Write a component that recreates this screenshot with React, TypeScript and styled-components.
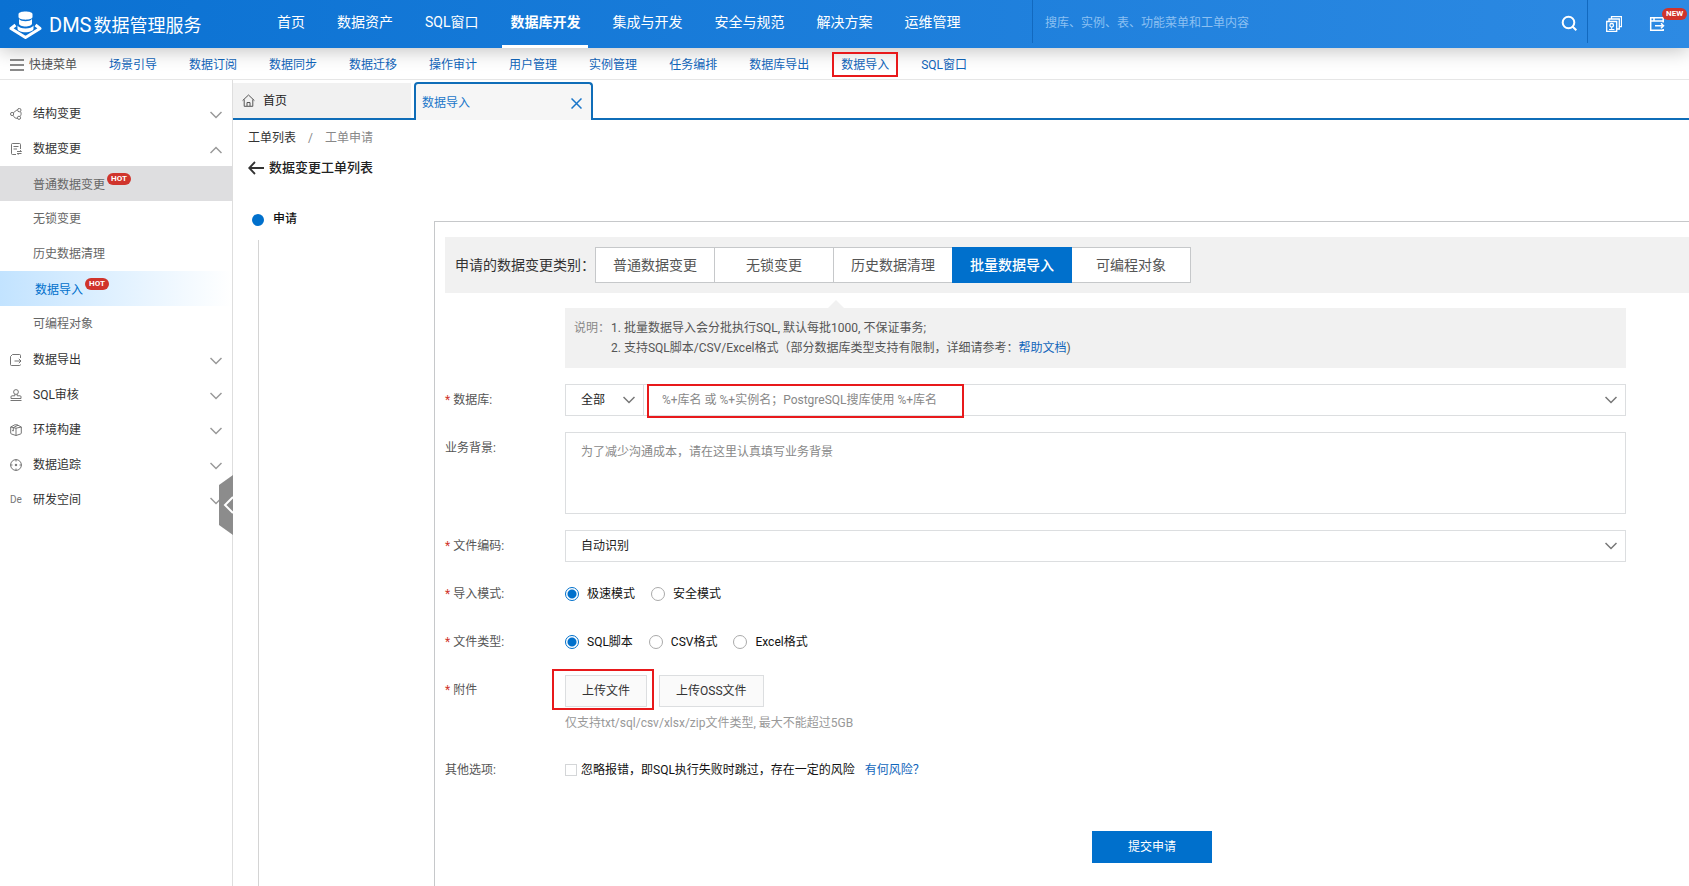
import React from "react";
import styled, { createGlobalStyle, css } from "styled-components";

const GlobalStyle = createGlobalStyle`
  * { box-sizing: border-box; }
  html, body, #root { height: 100%; }
  body {
    margin: 0;
    background: #fff;
    color: #333;
    font-family: Roboto, "Noto Sans CJK SC", sans-serif;
    font-size: 12px;
    line-height: 20px;
  }
  button, input, select, textarea { font: inherit; color: inherit; margin: 0; }
  a { text-decoration: none; }
`;

const BLUE = "#0070cc";
const LINK = "#1166bb";

const Page = styled.div`
  min-height: 100%;
  display: flex;
  flex-direction: column;
  overflow: hidden;
`;

const Header = styled.header`
  position: relative;
  z-index: 1;
  display: flex;
  height: 48px;
  flex: none;
  color: #fff;
  background: linear-gradient(90deg, #0a71d2, #2d8ae3);
  box-shadow: 0 2px 20px rgba(0, 0, 0, 0.26);
`;

const Brand = styled.a`
  display: flex;
  align-items: center;
  gap: 7px;
  width: 269px;
  flex: none;
  padding: 2px 0 0 9px;
  color: #fff;
  font-size: 18px;
  line-height: 24px;
`;

const BrandLatin = styled.span`
  margin-right: 2px;
  font-size: 20px;
`;

const TopNav = styled.nav`
  display: flex;
  gap: 16px;
`;

const TopLink = styled.a<{ $active?: boolean }>`
  display: flex;
  align-items: center;
  padding: 0 8px 4px;
  color: #fff;
  font-size: 14px;
  white-space: nowrap;
  font-weight: ${(p) => (p.$active ? 700 : 400)};
  box-shadow: ${(p) => (p.$active ? "inset 0 -3px #fff" : "none")};
`;

const SearchBar = styled.label`
  display: flex;
  align-items: center;
  width: 556px;
  height: 43px;
  margin-left: auto;
  padding: 2px 10px 0 12px;
  border: solid #1269bf;
  border-width: 0 1px;
`;

const SearchInput = styled.input`
  flex: 1;
  min-width: 0;
  padding: 0;
  border: 0;
  outline: 0;
  background: none;
  &::placeholder { color: #8cc0f2; opacity: 1; }
`;

const HeaderTools = styled.div`
  display: flex;
  align-items: center;
  gap: 27px;
  width: 101px;
  flex: none;
  padding-left: 18px;
`;

const IconButton = styled.button`
  position: relative;
  display: flex;
  padding: 0;
  border: 0;
  background: none;
  color: #fff;
`;

const pill = css`
  height: 12px;
  padding: 0 4px;
  border-radius: 6px;
  background: #d0342c;
  color: #fff;
  font-size: 8px;
  font-weight: 700;
  line-height: 12px;
`;

const NewBadge = styled.span`
  ${pill}
  position: absolute;
  left: 13px;
  bottom: 12px;
`;

const HotBadge = styled.span`
  ${pill}
  margin: 0 0 12px 2px;
`;

const QuickBar = styled.nav`
  display: flex;
  align-items: center;
  gap: 32px;
  height: 32px;
  flex: none;
  padding: 2px 0 0 9px;
  border-bottom: 1px solid #e6e6e6;
  white-space: nowrap;
`;

const QuickMenu = styled.button`
  display: flex;
  align-items: center;
  gap: 4px;
  padding: 0;
  border: 0;
  background: none;
  color: #555;
`;

const QuickLink = styled.a`
  position: relative;
  color: ${LINK};
`;

const Mark = styled.span<{ $inset: string; $width?: number }>`
  position: absolute;
  z-index: 2;
  inset: ${(p) => p.$inset};
  width: ${(p) => (p.$width ? `${p.$width}px` : "auto")};
  border: 2px solid #e8191b;
  pointer-events: none;
`;

const Body = styled.div`
  display: flex;
  flex: 1;
`;

const Sidebar = styled.aside`
  position: relative;
  width: 233px;
  flex: none;
  padding-top: 16px;
  border-right: 1px solid #dedede;
`;

const Group = styled.button`
  display: flex;
  align-items: center;
  gap: 11px;
  width: 100%;
  height: 35px;
  padding: 0 10px;
  border: 0;
  background: none;
  text-align: left;
`;

const GroupName = styled.span`
  flex: 1;
`;

const GroupArrow = styled.span`
  display: flex;
  padding-top: 3px;
`;

const SubMenu = styled.div`
  padding-bottom: 1px;
`;

const SubLink = styled.a<{ $state?: "hover" | "active" }>`
  display: flex;
  align-items: center;
  height: 35px;
  padding-top: ${(p) => (p.$state ? 2 : 0)}px;
  padding-left: ${(p) => (p.$state === "active" ? 35 : 33)}px;
  color: ${(p) => (p.$state === "active" ? BLUE : "#666")};
  background: ${(p) =>
    p.$state === "active"
      ? "linear-gradient(90deg, #c2e3ff, #fff)"
      : p.$state === "hover"
        ? "#dedee0"
        : "none"};
`;

const Collapse = styled.button`
  position: absolute;
  top: 395px;
  right: -1px;
  display: flex;
  padding: 0;
  border: 0;
  background: none;
`;

const Main = styled.main`
  display: flex;
  flex: 1;
  flex-direction: column;
  min-width: 0;
`;

const Tabs = styled.div`
  display: flex;
  align-items: flex-end;
  height: 40px;
  padding-top: 2px;
  box-shadow: inset 0 -2px #0f6db8;
`;

const Tab = styled.button<{ $active?: boolean }>`
  display: flex;
  align-items: center;
  gap: 8px;
  height: ${(p) => (p.$active ? 38 : 35)}px;
  width: ${(p) => (p.$active ? 179 : 178)}px;
  margin: ${(p) => (p.$active ? "0" : "0 3px 2px 0")};
  padding: ${(p) => (p.$active ? "2px 9px 0 6px" : "0 9px")};
  border: ${(p) => (p.$active ? "2px solid #0f6db8" : "0")};
  border-bottom: 0;
  border-radius: ${(p) => (p.$active ? "4px 4px 0 0" : "0")};
  background: ${(p) => (p.$active ? "#f6f6f6" : "#f1f1f1")};
  color: ${(p) => (p.$active ? "#1a76c9" : "#222")};
`;

const TabName = styled.span`
  flex: 1;
  text-align: left;
`;

const Crumbs = styled.nav`
  display: flex;
  gap: 12px;
  margin: 8px 15px 0;
  color: #888;
`;

const CrumbLink = styled.a`
  color: #333;
`;

const BackLink = styled.a`
  display: flex;
  align-items: center;
  gap: 5px;
  margin: 10px 15px 0;
  color: #222;
`;

const PageTitle = styled.h1`
  margin: 0;
  font-size: 13px;
  font-weight: 500;
`;

const Workspace = styled.div`
  display: flex;
  flex: 1;
  margin-top: 30px;
`;

const Steps = styled.div`
  display: flex;
  flex-direction: column;
  width: 201px;
  flex: none;
  padding-left: 19px;
`;

const Step = styled.div`
  display: flex;
  align-items: center;
  gap: 9px;
  height: 24px;
  color: #111;
  font-weight: 500;
`;

const StepName = styled.span`
  padding-bottom: 2px;
`;

const StepDot = styled.span`
  width: 12px;
  height: 12px;
  border-radius: 50%;
  background: ${BLUE};
`;

const StepLine = styled.div`
  flex: 1;
  width: 1px;
  margin: 8px 0 0 6px;
  background: #d4d4d4;
`;

const Panel = styled.form`
  flex: 1;
  min-width: 0;
  margin-top: 13px;
  padding: 15px 0 22px 10px;
  border: solid #c6c8ca;
  border-width: 1px 0 0 1px;
`;

const KindBar = styled.div`
  display: flex;
  align-items: center;
  height: 56px;
  padding: 0 10px;
  background: #f1f1f1;
  color: #333;
  font-size: 14px;
  white-space: nowrap;
`;

const KindButtons = styled.div`
  display: flex;
`;

const Kind = styled.button<{ $active?: boolean }>`
  position: relative;
  z-index: ${(p) => (p.$active ? 1 : 0)};
  width: 120px;
  height: 36px;
  padding: 0;
  border: 1px solid ${(p) => (p.$active ? BLUE : "#c6c8ca")};
  background: ${(p) => (p.$active ? BLUE : "#fff")};
  color: ${(p) => (p.$active ? "#fff" : "#555")};
  font-weight: ${(p) => (p.$active ? 500 : 400)};
  & + & { margin-left: -1px; }
`;

const Fields = styled.div`
  display: grid;
  gap: 16px;
  padding: 15px 63px 0 0;
`;

const Note = styled.div`
  position: relative;
  display: flex;
  margin-left: 120px;
  padding: 10px 9px;
  background: #f1f1f1;
  color: #555;
  &::before {
    content: "";
    position: absolute;
    left: 263px;
    bottom: 100%;
    border: 8px solid transparent;
    border-top: 0;
    border-bottom-color: #f1f1f1;
  }
`;

const NoteTitle = styled.span`
  width: 37px;
  color: #888;
`;

const TextLink = styled.a`
  color: ${LINK};
`;

const Row = styled.div`
  display: grid;
  grid-template-columns: 120px minmax(0, 1fr);
`;

const RowLabel = styled.label<{ $required?: boolean }>`
  height: 32px;
  color: #555;
  line-height: 32px;
  ${(p) =>
    p.$required &&
    css`
      &::before {
        content: "*";
        margin-right: 3px;
        color: #d0342c;
      }
    `}
`;

const SelectBox = styled.div<{ $width?: number }>`
  position: relative;
  display: flex;
  align-items: center;
  height: 32px;
  flex: ${(p) => (p.$width ? "none" : "1")};
  width: ${(p) => (p.$width ? `${p.$width}px` : "auto")};
  border: 1px solid #dcdee0;
  color: #222;
  & > svg {
    position: absolute;
    right: 8px;
    pointer-events: none;
  }
  & + & { margin-left: -1px; }
`;

const fieldText = css`
  width: 100%;
  height: 30px;
  padding: 0 15px;
  border: 0;
  outline: 0;
  background: none;
  &::placeholder { color: #888; opacity: 1; }
`;

const Select = styled.select`
  ${fieldText}
  appearance: none;
`;

const ComboInput = styled.input`
  ${fieldText}
  padding-left: 18px;
`;

const TextArea = styled.textarea`
  display: block;
  width: 100%;
  height: 82px;
  padding: 9px 15px;
  border: 1px solid #dcdee0;
  outline: 0;
  resize: none;
  &::placeholder { color: #888; opacity: 1; }
`;

const Line = styled.div`
  display: flex;
`;

const Choices = styled.div<{ $gap?: number }>`
  display: flex;
  align-items: center;
  gap: ${(p) => p.$gap ?? 16}px;
  height: 32px;
  color: #111;
`;

const Choice = styled.label<{ $gap?: number }>`
  display: flex;
  align-items: center;
  gap: ${(p) => p.$gap ?? 8}px;
`;

const Radio = styled.input`
  appearance: none;
  width: 14px;
  height: 14px;
  border: 1px solid #aaa;
  border-radius: 50%;
  &:checked {
    border-color: ${BLUE};
    background: radial-gradient(circle, ${BLUE} 4px, #fff 5px);
  }
`;

const Check = styled.input`
  appearance: none;
  width: 12px;
  height: 12px;
  border: 1px solid #d4d6d8;
`;

const Uploads = styled.div`
  display: flex;
  gap: 12px;
  padding-top: 1px;
`;

const UploadButton = styled.button`
  position: relative;
  height: 32px;
  padding: 0 16px;
  border: 1px solid #dcdee0;
  background: #fafafa;
`;

const Hint = styled.div`
  height: 31px;
  color: #999;
  line-height: 32px;
`;

const SubmitRow = styled.div`
  display: flex;
  justify-content: center;
  margin-top: 45px;
  padding: 0 10px 0 180px;
`;

const Submit = styled.button`
  width: 120px;
  height: 32px;
  padding: 0;
  border: 0;
  background: ${BLUE};
  color: #fff;
`;

function Chevron({ up = false, color = "#999" }: { up?: boolean; color?: string }) {
  return (
    <svg width="12" height="8" viewBox="0 0 12 8" fill="none" stroke={color} strokeWidth="1.5">
      <path d={up ? "M.5 7 6 1.5 11.500 7" : "M.5 1 6 6.500 11.500 1"} />
    </svg>
  );
}

const groupIcons: Record<string, React.ReactNode> = {
  structure: (
    <>
      <path d="M3.300 4.800 7.400 1.600M3.200 7.400C4 9.500 5.500 10.500 7.300 10.300M10.700 3.800c.8 1.800.4 3.500-.7 4.700" />
      <circle cx="2.100" cy="6" r="1.600" />
      <circle cx="9.300" cy="2.100" r="1.700" />
      <circle cx="9" cy="9.800" r="1.600" />
    </>
  ),
  change: <path d="M10.500 6V1.500a1 1 0 0 0-1-1h-7a1 1 0 0 0-1 1v9a1 1 0 0 0 1 1H6M3.500 3.500h5M3.500 6H7M7 8.500h4.500L10 7.200M11.500 10.500H7.200l1.400 1.200" />,
  export: <path d="M10.500 4V1.500a1 1 0 0 0-1-1h-7l-2 2v8a1 1 0 0 0 1 1h8a1 1 0 0 0 1-1M4.500 7H11M8.800 4.800 11 7 8.800 9.200" />,
  audit: (
    <>
      <circle cx="6" cy="3" r="2.400" />
      <path d="M4.800 5.200v1.600H2a1 1 0 0 0-1 1v1.700h10V7.800a1 1 0 0 0-1-1H7.200V5.200M.5 11.500h11" />
    </>
  ),
  env: <path d="M6 4v7.500L1.500 10a1 1 0 0 1-.8-1V3L4.800.8h2.400L11.300 3v6a1 1 0 0 1-.8 1L6 11.500M.7 3 6 4.200 11.300 3M3.300 3.700V7l-1.200-.5M3.500 3.500 8 1.200" />,
  trace: (
    <>
      <circle cx="6" cy="6" r="5.400" />
      <path d="M6 .5v2M6 9.500v2M.5 6h2M9.500 6h2" />
      <circle cx="6" cy="6" r=".8" fill="#666" />
    </>
  ),
};

const DevMark = styled.span`
  width: 12px;
  color: #777;
  font-size: 10px;
`;

function GroupIcon({ name }: { name: string }) {
  if (name === "dev") return <DevMark>De</DevMark>;
  return (
    <svg width="12" height="12" viewBox="0 0 12 12" fill="none" stroke="#666" strokeWidth=".9">
      {groupIcons[name]}
    </svg>
  );
}

interface SubItem {
  name: string;
  hot?: boolean;
  state?: "hover" | "active";
}

const groups: { name: string; icon: string; items?: SubItem[] }[] = [
  { name: "结构变更", icon: "structure" },
  {
    name: "数据变更",
    icon: "change",
    items: [
      { name: "普通数据变更", hot: true, state: "hover" },
      { name: "无锁变更" },
      { name: "历史数据清理" },
      { name: "数据导入", hot: true, state: "active" },
      { name: "可编程对象" },
    ],
  },
  { name: "数据导出", icon: "export" },
  { name: "SQL审核", icon: "audit" },
  { name: "环境构建", icon: "env" },
  { name: "数据追踪", icon: "trace" },
  { name: "研发空间", icon: "dev" },
];

const topLinks = ["首页", "数据资产", "SQL窗口", "数据库开发", "集成与开发", "安全与规范", "解决方案", "运维管理"];
const quickLinks = ["场景引导", "数据订阅", "数据同步", "数据迁移", "操作审计", "用户管理", "实例管理", "任务编排", "数据库导出", "数据导入", "SQL窗口"];
const kinds = ["普通数据变更", "无锁变更", "历史数据清理", "批量数据导入", "可编程对象"];

function RadioRow({ label, name, options }: { label: string; name: string; options: string[] }) {
  return (
    <Row role="radiogroup" aria-labelledby={name}>
      <RowLabel as="span" id={name} $required>{label}</RowLabel>
      <Choices>
        {options.map((option, i) => (
          <Choice key={option}>
            <Radio type="radio" name={name} defaultChecked={i === 0} />
            {option}
          </Choice>
        ))}
      </Choices>
    </Row>
  );
}

export default function App() {
  return (
    <Page>
      <GlobalStyle />
      <Header>
        <Brand href="#">
          <svg width="33" height="29" viewBox="0 0 33 29">
            <path d="M6.500 14 2 17.500 16.500 26.500 31 17.500 26.500 14" fill="none" stroke="#fff" strokeWidth="3" strokeLinejoin="round" />
            <path d="M8.500 14.500v3c0 5 16 5 16 0v-3c-2 4-14 4-16 0z" fill="#fff" />
            <path d="M10 8v4.500c0 4 13 4 13 0V8c-2 3-11 3-13 0z" fill="#fff" />
            <path d="M9.500 3v3c0 3.500 14 3.500 14 0V3c0-3.500-14-3.500-14 0z" fill="#fff" />
          </svg>
          <span><BrandLatin>DMS</BrandLatin>数据管理服务</span>
        </Brand>
        <TopNav>
          {topLinks.map((name) => (
            <TopLink key={name} href="#" $active={name === "数据库开发"}>{name}</TopLink>
          ))}
        </TopNav>
        <SearchBar>
          <SearchInput aria-label="搜索" placeholder="搜库、实例、表、功能菜单和工单内容" />
          <svg width="16" height="16" viewBox="0 0 16 16" fill="none" stroke="#fff" strokeWidth="2">
            <circle cx="7.500" cy="7.500" r="5.800" />
            <path d="m11.500 11.500 3.800 3.800" />
          </svg>
        </SearchBar>
        <HeaderTools>
          <IconButton aria-label="实例列表">
            <svg width="16" height="16" viewBox="0 0 16 16" fill="none" stroke="#fff">
              <path d="M.7 5.500h10v10H.7zM3 5V3h10.300v10H11M5.500 2.500V.6h10v10h-2" strokeWidth="1.300" />
              <circle cx="5.700" cy="9.300" r="1.800" strokeWidth="1.300" />
              <path d="M5.700 11v2M3 13.500h5.400" />
            </svg>
          </IconButton>
          <IconButton aria-label="切换新版">
            <svg width="16" height="16" viewBox="0 0 16 16" fill="none" stroke="#fff" strokeWidth="1.500">
              <path d="M14.200 6.500V1.700H1.700v12.600h12.500V13M1.700 5h12.500M5 1.700V5M6 9.700h8.500M12 7.200l2.500 2.500-2.500 2.500" />
            </svg>
            <NewBadge>NEW</NewBadge>
          </IconButton>
        </HeaderTools>
      </Header>

      <QuickBar>
        <QuickMenu>
          <svg width="16" height="12" viewBox="0 0 16 12" stroke="#666" strokeWidth="1.500">
            <path d="M1 1h14M1 6h14M1 11h14" />
          </svg>
          快捷菜单
        </QuickMenu>
        {quickLinks.map((name) => (
          <QuickLink key={name} href="#">
            {name}
            {name === "数据导入" && <Mark $inset="-3px -9px -2px" />}
          </QuickLink>
        ))}
      </QuickBar>

      <Body>
        <Sidebar>
          {groups.map((group) => (
            <React.Fragment key={group.name}>
              <Group>
                <GroupIcon name={group.icon} />
                <GroupName>{group.name}</GroupName>
                <GroupArrow><Chevron up={Boolean(group.items)} /></GroupArrow>
              </Group>
              {group.items && (
                <SubMenu>
                  {group.items.map((item) => (
                    <SubLink key={item.name} href="#" $state={item.state}>
                      {item.name}
                      {item.hot && <HotBadge>HOT</HotBadge>}
                    </SubLink>
                  ))}
                </SubMenu>
              )}
            </React.Fragment>
          ))}
          <Collapse aria-label="收起菜单">
            <svg width="14" height="60" viewBox="0 0 14 60">
              <path d="M14 0v60L0 50V10z" fill="#8c8c8c" />
              <path d="m14 22-8 8 8 8" fill="none" stroke="#fff" strokeWidth="2" />
            </svg>
          </Collapse>
        </Sidebar>

        <Main>
          <Tabs>
            <Tab>
              <svg width="13" height="13" viewBox="0 0 13 13" fill="none" stroke="#555">
                <path d="M.6 6.600 6.500 1l5.900 5.600M2.200 5.500v6.800h8.600V5.500M5 12V8.500h3V12" />
              </svg>
              <TabName>首页</TabName>
            </Tab>
            <Tab $active>
              <TabName>数据导入</TabName>
              <svg width="11" height="11" viewBox="0 0 11 11" stroke="#1a76c9" strokeWidth="1.500">
                <path d="m.5.5 10 10M10.500.5l-10 10" />
              </svg>
            </Tab>
          </Tabs>

          <Crumbs>
            <CrumbLink href="#">工单列表</CrumbLink>
            <span>/</span>
            <span>工单申请</span>
          </Crumbs>
          <BackLink href="#">
            <svg width="16" height="14" viewBox="0 0 16 14" fill="none" stroke="#333" strokeWidth="1.800">
              <path d="M7 1 1.200 7 7 13M1.200 7H16" />
            </svg>
            <PageTitle>数据变更工单列表</PageTitle>
          </BackLink>

          <Workspace>
            <Steps>
              <Step><StepDot /><StepName>申请</StepName></Step>
              <StepLine />
            </Steps>

            <Panel onSubmit={(e) => e.preventDefault()}>
              <KindBar>
                <span>申请的数据变更类别：</span>
                <KindButtons>
                  {kinds.map((name) => (
                    <Kind key={name} type="button" $active={name === "批量数据导入"}>{name}</Kind>
                  ))}
                </KindButtons>
              </KindBar>

              <Fields>
                <Note>
                  <NoteTitle>说明：</NoteTitle>
                  <div>
                    <div>1. 批量数据导入会分批执行SQL, 默认每批1000, 不保证事务;</div>
                    <div>2. 支持SQL脚本/CSV/Excel格式（部分数据库类型支持有限制，详细请参考：<TextLink href="#">帮助文档</TextLink>)</div>
                  </div>
                </Note>

                <Row>
                  <RowLabel htmlFor="database" $required>数据库:</RowLabel>
                  <Line>
                    <SelectBox $width={79}>
                      <Select aria-label="范围"><option>全部</option></Select>
                      <Chevron color="#777" />
                    </SelectBox>
                    <SelectBox>
                      <ComboInput id="database" placeholder="%+库名 或 %+实例名；PostgreSQL搜库使用 %+库名" />
                      <Chevron color="#777" />
                      <Mark $inset="-1px auto -3px 3px" $width={317} />
                    </SelectBox>
                  </Line>
                </Row>

                <Row>
                  <RowLabel htmlFor="background">业务背景:</RowLabel>
                  <TextArea id="background" placeholder="为了减少沟通成本，请在这里认真填写业务背景" />
                </Row>

                <Row>
                  <RowLabel htmlFor="encoding" $required>文件编码:</RowLabel>
                  <SelectBox>
                    <Select id="encoding"><option>自动识别</option></Select>
                    <Chevron color="#777" />
                  </SelectBox>
                </Row>

                <RadioRow label="导入模式:" name="mode" options={["极速模式", "安全模式"]} />
                <RadioRow label="文件类型:" name="type" options={["SQL脚本", "CSV格式", "Excel格式"]} />

                <Row>
                  <RowLabel htmlFor="upload" $required>附件</RowLabel>
                  <div>
                    <Uploads>
                      <UploadButton id="upload" type="button">
                        上传文件
                        <Mark $inset="-7px -8px -4px -14px" />
                      </UploadButton>
                      <UploadButton type="button">上传OSS文件</UploadButton>
                    </Uploads>
                    <Hint>仅支持txt/sql/csv/xlsx/zip文件类型, 最大不能超过5GB</Hint>
                  </div>
                </Row>

                <Row>
                  <RowLabel as="span">其他选项:</RowLabel>
                  <Choices $gap={10}>
                    <Choice $gap={4}>
                      <Check type="checkbox" />
                      忽略报错，即SQL执行失败时跳过，存在一定的风险
                    </Choice>
                    <TextLink href="#">有何风险？</TextLink>
                  </Choices>
                </Row>
              </Fields>

              <SubmitRow>
                <Submit>提交申请</Submit>
              </SubmitRow>
            </Panel>
          </Workspace>
        </Main>
      </Body>
    </Page>
  );
}
